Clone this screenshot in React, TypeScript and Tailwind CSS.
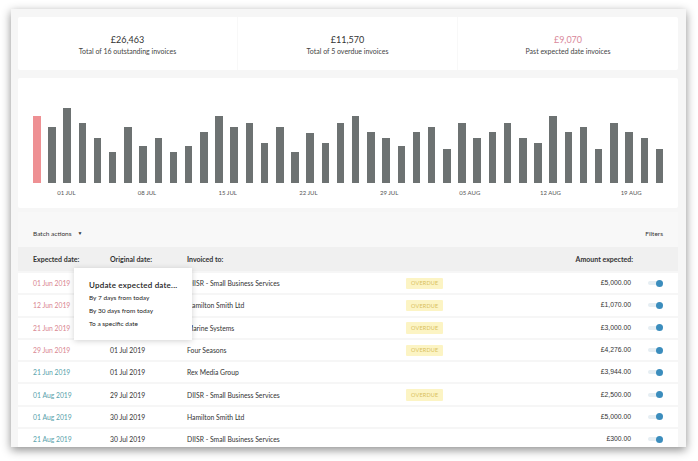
import React from "react";

const heights = [67,56,75,60,45,31,56,37,45,31,37,51,67,56,60,40,56,31,50,40,60,67,51,45,37,51,56,34,60,45,51,60,45,40,67,51,56,34,60,51,45,34];
const labels = ["01 JUL","08 JUL","15 JUL","22 JUL","29 JUL","05 AUG","12 AUG","19 AUG"];

type Row = { exp: string; red: boolean; orig: string; to: string; overdue: boolean; amt: string };
const rows: Row[] = [
  { exp: "01 Jun 2019", red: true, orig: "", to: "DIISR - Small Business Services", overdue: true, amt: "£5,000.00" },
  { exp: "12 Jun 2019", red: true, orig: "", to: "Hamilton Smith Ltd", overdue: true, amt: "£1,070.00" },
  { exp: "21 Jun 2019", red: true, orig: "", to: "Marine Systems", overdue: true, amt: "£3,000.00" },
  { exp: "29 Jun 2019", red: true, orig: "01 Jul 2019", to: "Four Seasons", overdue: true, amt: "£4,276.00" },
  { exp: "21 Jun 2019", red: false, orig: "01 Jul 2019", to: "Rex Media Group", overdue: false, amt: "£3,944.00" },
  { exp: "01 Aug 2019", red: false, orig: "29 Jul 2019", to: "DIISR - Small Business Services", overdue: true, amt: "£2,500.00" },
  { exp: "01 Aug 2019", red: false, orig: "30 Jul 2019", to: "Hamilton Smith Ltd", overdue: false, amt: "£5,000.00" },
  { exp: "21 Aug 2019", red: false, orig: "30 Jul 2019", to: "DIISR - Small Business Services", overdue: false, amt: "£300.00" },
];

function Toggle() {
  return (
    <div className="relative w-[15px] h-[4px] rounded-full bg-[#e6eef3]">
      <div className="absolute right-[0px] top-[-1.5px] w-[7px] h-[7px] rounded-full bg-[#3b8dbd]" />
    </div>
  );
}

export default function App() {
  return (
    <div className="w-[698px] h-[461px] bg-white overflow-hidden" style={{ fontFamily: "Lato, 'Open Sans', sans-serif" }}>
      <div className="ml-[11px] mt-[9px] w-[675px] h-[438px] bg-[#f6f6f6] shadow-[0_3px_9px_rgba(0,0,0,0.45)] overflow-hidden flex flex-col pl-[7px] pr-[8px] pt-[8px]">
        {/* Summary */}
        <div className="h-[53px] shrink-0 bg-white rounded-[2px] grid grid-cols-3 text-[#333]">
          <div className="flex flex-col items-center justify-center border-r border-[#f8f8f8] pt-[2px]">
            <div className="text-[9px] leading-[12px]">£26,463</div>
            <div className="text-[7px] leading-[10px] text-[#444]">Total of 16 outstanding invoices</div>
          </div>
          <div className="flex flex-col items-center justify-center border-r border-[#f8f8f8] pt-[2px]">
            <div className="text-[9px] leading-[12px]">£11,570</div>
            <div className="text-[7px] leading-[10px] text-[#444]">Total of 5 overdue invoices</div>
          </div>
          <div className="flex flex-col items-center justify-center pt-[2px]">
            <div className="text-[9px] leading-[12px] text-[#d9889a]">£9,070</div>
            <div className="text-[7px] leading-[10px] text-[#444]">Past expected date invoices</div>
          </div>
        </div>

        {/* Chart */}
        <div className="mt-[8px] h-[130px] shrink-0 bg-white rounded-[2px] flex flex-col pl-[15px]">
          <div className="h-[105px] flex items-end gap-[7.7px]">
            {heights.map((h, i) => (
              <div
                key={i}
                className={i === 0 ? "w-[7.5px] bg-[#ee9093]" : "w-[7.5px] bg-[#6d7272]"}
                style={{ height: h }}
              />
            ))}
          </div>
          <div className="flex ml-[-7px] mt-[5px]">
            {labels.map((l) => (
              <div key={l} className="w-[80.7px] text-center text-[6px] leading-[10px] text-[#555]">{l}</div>
            ))}
          </div>
        </div>

        {/* Table */}
        <div className="relative mt-[4px] flex flex-col shrink-0">
          <div className="h-[35px] shrink-0 flex items-center justify-between pl-[15px] pr-[15px] pt-[8px] bg-[#f8f8f8]">
            <div className="flex items-center gap-[6px] text-[6.5px] text-[#333]">
              <span>Batch actions</span>
              <span className="text-[5px]">▼</span>
            </div>
            <div className="text-[6.5px] text-[#333]">Filters</div>
          </div>
          <div className="h-[24px] shrink-0 bg-[#f0f0f0] flex items-center text-[7px] font-bold text-[#333] mb-[2px]">
            <div className="w-[92px] pl-[15px]">Expected date:</div>
            <div className="w-[77px]">Original date:</div>
            <div className="flex-1">Invoiced to:</div>
            <div className="w-[120px] text-right">Amount expected:</div>
            <div className="w-[45px]" />
          </div>
          {rows.map((r, i) => (
            <div key={i} className="h-[20.3px] mb-[2px] bg-white flex items-center text-[6.8px] text-[#333] shrink-0">
              <div className={"w-[92px] pl-[15px] " + (r.red ? "text-[#d98590]" : "text-[#58a2ab]")}>{r.exp}</div>
              <div className="w-[77px]">{r.orig}</div>
              <div className="w-[219px]">{r.to}</div>
              <div className="flex-1">
                {r.overdue && (
                  <span className="inline-block bg-[#fcf4c4] text-[#d9c15d] text-[5.5px] px-[5px] py-[1.5px] rounded-[1px] tracking-[0.2px]">OVERDUE</span>
                )}
              </div>
              <div className="w-[120px] text-right pr-[2px]" style={{ fontFamily: "'Liberation Sans', Arial, sans-serif" }}>{r.amt}</div>
              <div className="w-[45px] flex justify-start pl-[15px]">
                <Toggle />
              </div>
            </div>
          ))}

          {/* Popup */}
          <div className="absolute left-[56px] top-[56px] w-[118px] h-[72px] bg-white shadow-[0_1px_6px_rgba(0,0,0,0.18)] flex flex-col pl-[15px] pt-[11px] text-[#222]">
            <div className="text-[8px] leading-[12px] font-semibold tracking-[0.2px]">Update expected date...</div>
            <div className="text-[6.5px] leading-[13px]">By 7 days from today</div>
            <div className="text-[6.5px] leading-[13px]">By 30 days from today</div>
            <div className="text-[6.5px] leading-[13px]">To a specific date</div>
          </div>
        </div>
      </div>
    </div>
  );
}
